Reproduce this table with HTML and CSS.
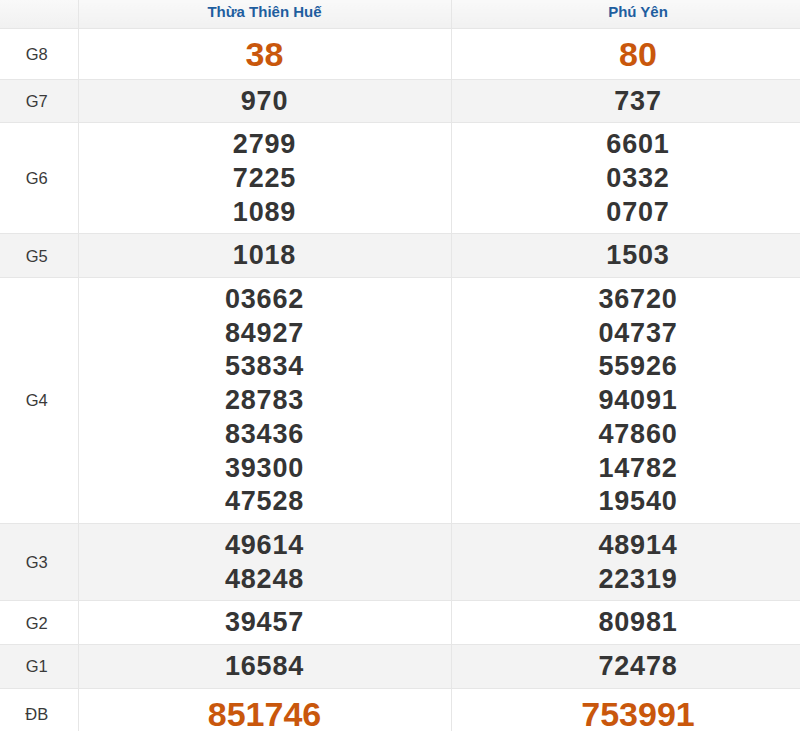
FILE: index.html
```html
<!DOCTYPE html>
<html lang="vi">
<head>
<meta charset="utf-8">
<title>Kết quả xổ số</title>
<link rel="stylesheet" href="styles.css">
</head>
<body>
<table class="kq">
  <colgroup>
    <col class="c-label">
    <col class="c-prov1">
    <col class="c-prov2">
  </colgroup>
  <thead>
    <tr class="head">
      <th></th>
      <th>Thừa Thiên Huế</th>
      <th>Phú Yên</th>
    </tr>
  </thead>
  <tbody>
    <tr class="big">
      <td class="lbl">G8</td>
      <td><div class="n red">38</div></td>
      <td><div class="n red">80</div></td>
    </tr>
    <tr class="alt">
      <td class="lbl">G7</td>
      <td><div class="n">970</div></td>
      <td><div class="n">737</div></td>
    </tr>
    <tr>
      <td class="lbl">G6</td>
      <td><div class="n">2799</div><div class="n">7225</div><div class="n">1089</div></td>
      <td><div class="n">6601</div><div class="n">0332</div><div class="n">0707</div></td>
    </tr>
    <tr class="alt">
      <td class="lbl">G5</td>
      <td><div class="n">1018</div></td>
      <td><div class="n">1503</div></td>
    </tr>
    <tr>
      <td class="lbl">G4</td>
      <td><div class="n">03662</div><div class="n">84927</div><div class="n">53834</div><div class="n">28783</div><div class="n">83436</div><div class="n">39300</div><div class="n">47528</div></td>
      <td><div class="n">36720</div><div class="n">04737</div><div class="n">55926</div><div class="n">94091</div><div class="n">47860</div><div class="n">14782</div><div class="n">19540</div></td>
    </tr>
    <tr class="alt">
      <td class="lbl">G3</td>
      <td><div class="n">49614</div><div class="n">48248</div></td>
      <td><div class="n">48914</div><div class="n">22319</div></td>
    </tr>
    <tr>
      <td class="lbl">G2</td>
      <td><div class="n">39457</div></td>
      <td><div class="n">80981</div></td>
    </tr>
    <tr class="alt">
      <td class="lbl">G1</td>
      <td><div class="n">16584</div></td>
      <td><div class="n">72478</div></td>
    </tr>
    <tr class="big">
      <td class="lbl">ĐB</td>
      <td><div class="n red">851746</div></td>
      <td><div class="n red">753991</div></td>
    </tr>
  </tbody>
</table>
</body>
</html>
```
FILE: styles.css
```css
html, body {
  margin: 0;
  padding: 0;
  background: #ffffff;
}
body {
  font-family: "Liberation Sans", Arial, sans-serif;
  color: #333333;
  overflow: hidden;
}
.kq {
  width: 825px;
  border-collapse: collapse;
  table-layout: fixed;
}
.c-label { width: 78px; }
.c-prov1 { width: 373px; }
.c-prov2 { width: 374px; }

.kq th, .kq td {
  border: 1px solid #e6e6e6;
  text-align: center;
  vertical-align: middle;
  padding: 5px 0 4px 0;
}
.kq tr > :first-child { border-left: none; }
.kq thead th { border-top: none; }

.head th {
  height: 28px;
  padding: 0 0 3px 0;
  background: linear-gradient(#f9f9f9, #f1f1f1);
  color: #1f5e9f;
  font-size: 15px;
  font-weight: bold;
  line-height: 20px;
  box-sizing: border-box;
}
.kq td.lbl {
  font-size: 16.5px;
  color: #3a3a3a;
  padding-right: 4px;
}
.alt td { background: #f3f3f3; }
.n {
  font-size: 27px;
  font-weight: bold;
  line-height: 33.7px;
  letter-spacing: 0.8px;
  color: #353535;
}
.big .n {
  font-size: 34px;
  line-height: 41px;
  letter-spacing: 0;
}
.n.red { color: #c9570c; }
```
